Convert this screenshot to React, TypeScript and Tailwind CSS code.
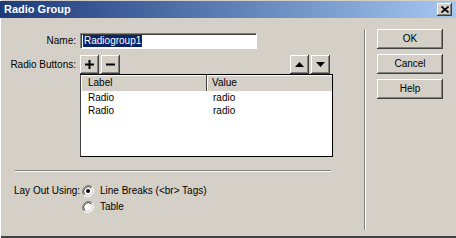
import type React from "react"

const raised =
  "bg-[#d4d0c8] shadow-[inset_-1px_-1px_#404040,inset_1px_1px_#ffffff,inset_-2px_-2px_#808080,inset_2px_2px_#d4d0c8]"

const Btn: React.FC<{ className?: string; children?: React.ReactNode }> = ({ className = "", children }) => (
  <div className={`${raised} flex items-center justify-center ${className}`}>{children}</div>
)

const Radio: React.FC<{ checked?: boolean }> = ({ checked }) => (
  <svg width="12" height="12" viewBox="0 0 12 12" className="shrink-0">
    <path d="M10.2 1.8 A6 6 0 0 0 1.8 10.2" fill="none" stroke="#808080" strokeWidth="1" />
    <path d="M1.8 10.2 A6 6 0 0 0 10.2 1.8" fill="none" stroke="#ffffff" strokeWidth="1" />
    <circle cx="6" cy="6" r="4.6" fill="#ffffff" />
    <path d="M9.3 2.7 A4.7 4.7 0 0 0 2.7 9.3" fill="none" stroke="#404040" strokeWidth="1" />
    <path d="M2.7 9.3 A4.7 4.7 0 0 0 9.3 2.7" fill="none" stroke="#d4d0c8" strokeWidth="1" />
    {checked && <circle cx="6" cy="6" r="2" fill="#000000" />}
  </svg>
)

export default function App() {
  return (
    <div
      className="w-[456px] h-[238px] bg-[#d4d0c8] flex flex-col text-[10px] leading-none text-black whitespace-nowrap shadow-[inset_1px_0_#ffffff,inset_0_-2px_#404040]"
      style={{ fontFamily: '"Liberation Sans", Arial, sans-serif' }}
    >
      {/* title bar */}
      <div className="mt-px h-[17px] flex items-center bg-gradient-to-r from-[#1e3a7b] to-[#a6c8f0] pl-[4px] pr-[4px]">
        <span className="text-white font-bold text-[11px]">Radio Group</span>
        <Btn className="ml-auto w-[15px] h-[13px]">
          <svg width="8" height="7" viewBox="0 0 8 7">
            <path d="M0.5 0.5 L7.5 6.5 M7.5 0.5 L0.5 6.5" stroke="#000" strokeWidth="1.6" />
          </svg>
        </Btn>
      </div>

      <div className="flex flex-1">
        {/* left column */}
        <div className="w-[364px] flex flex-col pt-[15px]">
          <div className="flex items-center h-[16px]">
            <div className="w-[76px] text-right">Name:</div>
            <div className="ml-[4px] w-[177px] h-[16px] bg-white border-t border-l border-[#808080] border-b border-r border-b-white border-r-white shadow-[inset_1px_1px_#404040] flex items-center pl-[2px]">
              <span className="bg-[#0a246a] text-white px-px py-px">Radiogroup1</span>
            </div>
          </div>

          <div className="flex items-center h-[19px] mt-[6px]">
            <div className="w-[76px] text-right">Radio Buttons:</div>
            <Btn className="ml-[4px] w-[19px] h-[19px]">
              <svg width="9" height="9" viewBox="0 0 9 9">
                <rect x="3.5" y="0" width="2" height="9" fill="#000" />
                <rect x="0" y="3.5" width="9" height="2" fill="#000" />
              </svg>
            </Btn>
            <Btn className="ml-[2px] w-[19px] h-[19px]">
              <svg width="9" height="9" viewBox="0 0 9 9">
                <rect x="0" y="3.5" width="9" height="2" fill="#000" />
              </svg>
            </Btn>
            <Btn className="ml-[170px] w-[19px] h-[19px]">
              <svg width="9" height="5" viewBox="0 0 9 5">
                <path d="M4.5 0 L9 5 L0 5 Z" fill="#000" />
              </svg>
            </Btn>
            <Btn className="ml-[2px] w-[19px] h-[19px]">
              <svg width="9" height="5" viewBox="0 0 9 5">
                <path d="M0 0 L9 0 L4.5 5 Z" fill="#000" />
              </svg>
            </Btn>
          </div>

          {/* list */}
          <div className="ml-[80px] w-[253px] h-[83px] bg-white border border-black border-l-[#404040] flex flex-col">
            <div className="flex h-[16px] bg-[#d4d0c8]">
              <div className="w-[126px] pl-[7px] flex items-center border-r border-[#404040] shadow-[inset_1px_1px_#ffffff]">Label</div>
              <div className="flex-1 pl-[5px] flex items-center shadow-[inset_1px_1px_#ffffff]">Value</div>
            </div>
            <div className="flex h-[13px] items-center">
              <div className="w-[127px] pl-[7px]">Radio</div>
              <div className="pl-[5px]">radio</div>
            </div>
            <div className="flex h-[13px] items-center">
              <div className="w-[127px] pl-[7px]">Radio</div>
              <div className="pl-[5px]">radio</div>
            </div>
          </div>

          <div className="mt-[13px] ml-[15px] w-[316px] h-[2px] border-t border-[#808080] border-b border-b-white" />

          <div className="mt-[13px] flex items-center h-[12px]">
            <div className="w-[82px] pl-[14px]">Lay Out Using:</div>
            <Radio checked />
            <span className="ml-[6px]">Line Breaks (&lt;br&gt; Tags)</span>
          </div>
          <div className="mt-[4px] flex items-center h-[12px]">
            <div className="w-[82px]" />
            <Radio />
            <span className="ml-[6px]">Table</span>
          </div>
        </div>

        {/* vertical divider */}
        <div className="mt-[11px] w-[2px] h-[201px] border-l border-[#808080] border-r border-r-white" />

        {/* buttons */}
        <div className="ml-[11px] mt-[11px] flex flex-col gap-[5px]">
          <Btn className="w-[66px] h-[20px]">OK</Btn>
          <Btn className="w-[66px] h-[20px]">Cancel</Btn>
          <Btn className="w-[66px] h-[20px]">Help</Btn>
        </div>
      </div>
    </div>
  )
}
